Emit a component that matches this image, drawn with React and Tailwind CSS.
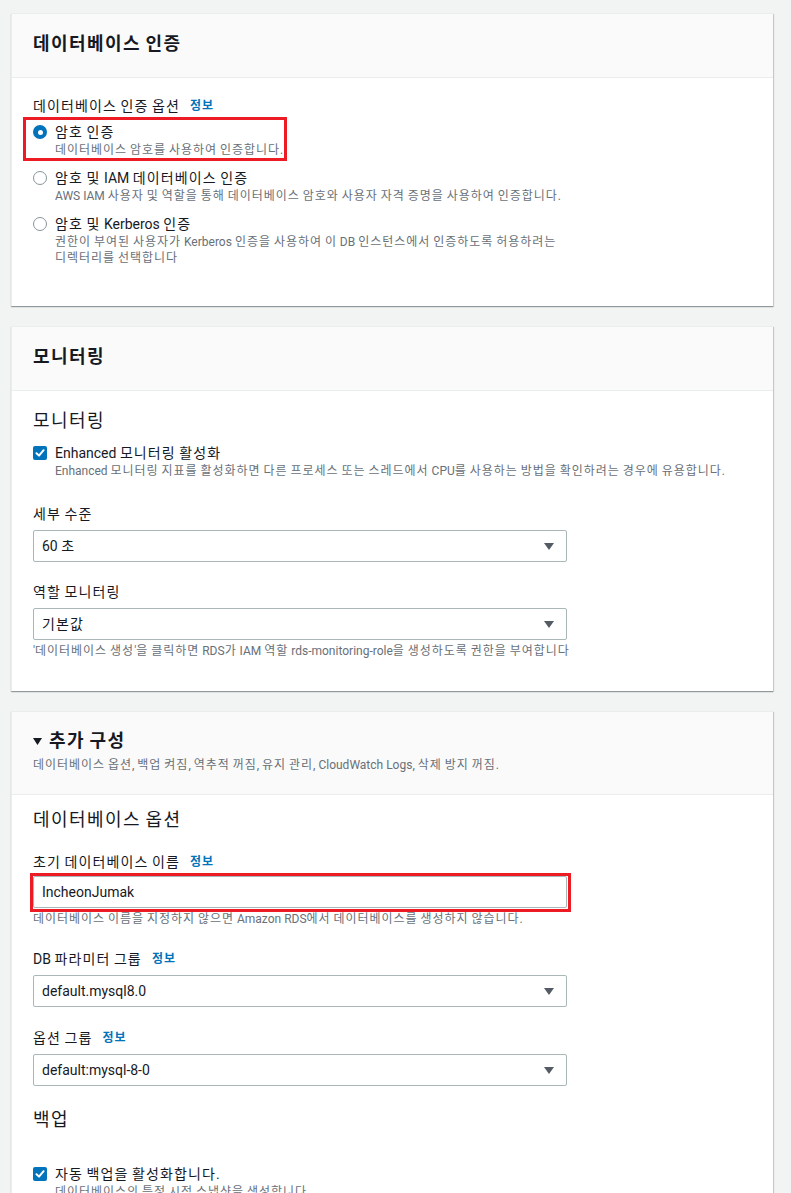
import React from "react";

const HANGUL = /([\uAC00-\uD7A3]+)/;
const k = (str) =>
  str.split(HANGUL).map((part, i) =>
    i % 2 === 1 ? (
      <span key={i} className="tracking-[0.08em]">
        {part}
      </span>
    ) : (
      part
    )
  );

const Info = () => (
  <span className="ml-[10px] text-[12px] font-bold text-[#0073bb]">{k("정보")}</span>
);

const Label = ({ children, info }) => (
  <div className="flex items-center h-[22px] text-[14px] leading-[22px] text-[#16191f]">
    <span>{k(children)}</span>
    {info && <Info />}
  </div>
);

const Arrow = () => (
  <svg width="10" height="7" viewBox="0 0 10 7" className="shrink-0">
    <path d="M0 0 L10 0 L5 7 Z" fill="#545b64" />
  </svg>
);

const Select = ({ value, className = "" }) => (
  <div
    className={
      "flex items-center justify-between w-[534px] h-[32px] border border-[#aab7b8] rounded-[2px] bg-white pl-[8px] pr-[12px] text-[14px] text-[#16191f] " +
      className
    }
  >
    <span>{k(value)}</span>
    <Arrow />
  </div>
);

const Radio = ({ checked }) =>
  checked ? (
    <span className="mt-[3px] flex items-center justify-center w-[14px] h-[14px] rounded-full bg-[#0073bb] shrink-0">
      <span className="w-[5px] h-[5px] rounded-full bg-white" />
    </span>
  ) : (
    <span className="mt-[3px] w-[14px] h-[14px] rounded-full border-[1.5px] border-[#879596] bg-white shrink-0" />
  );

const Checkbox = () => (
  <span className="mt-[2px] flex items-center justify-center w-[14px] h-[14px] rounded-[2px] bg-[#0073bb] shrink-0">
    <svg width="10" height="10" viewBox="0 0 10 10">
      <path d="M1.5 5.2 L4 7.6 L8.6 2.2" stroke="white" strokeWidth="2" fill="none" strokeLinecap="round" strokeLinejoin="round" />
    </svg>
  </span>
);

const RadioOption = ({ checked, title, desc, boxed }) => (
  <div className="relative flex gap-[8px]">
    <Radio checked={checked} />
    <div>
      <div className="text-[14px] leading-[20px] text-[#16191f]">{k(title)}</div>
      {desc.map((line, i) => (
        <div key={i} className="text-[12px] leading-[16px] text-[#687078]">
          {k(line)}
        </div>
      ))}
    </div>
    {boxed && (
      <span className="absolute -left-[10px] -top-[5px] w-[264px] h-[44px] border-[3px] border-[#ed1c24] pointer-events-none" />
    )}
  </div>
);

const CheckOption = ({ title, desc }) => (
  <div className="flex gap-[8px]">
    <Checkbox />
    <div>
      <div className="text-[14px] leading-[18px] text-[#16191f]">{k(title)}</div>
      <div className="mt-[1px] text-[12px] leading-[16px] text-[#687078]">{k(desc)}</div>
    </div>
  </div>
);

const Card = ({ children }) => (
  <div className="bg-white border-t border-l border-[#eaeded] shadow-[0_1px_1px_0_rgba(0,28,36,0.3),1px_1px_1px_0_rgba(0,28,36,0.15)]">
    {children}
  </div>
);

const Header = ({ title }) => (
  <div className="bg-[#fafafa] border-b border-[#eaeded] px-[21px] pt-[18px] pb-[21px]">
    <h2 className="text-[18px] leading-[24px] font-bold text-[#16191f]">{k(title)}</h2>
  </div>
);

const Hint = ({ children }) => (
  <div className="mt-[3px] text-[12px] leading-[16px] text-[#687078]">{k(children)}</div>
);

export default function App() {
  return (
    <div className="min-h-screen bg-[#f2f3f3] pt-[13px] pb-[40px] pl-[11px] pr-[18px] font-['Roboto','Noto_Sans_CJK_KR',sans-serif] text-[#16191f]">
      <div className="flex flex-col gap-[20px]">
        {/* Card 1 */}
        <Card>
          <Header title="데이터베이스 인증" />
          <div className="px-[21px] pt-[17px] pb-[40px]">
            <Label info>데이터베이스 인증 옵션</Label>
            <div className="mt-[5px] flex flex-col gap-[10px]">
              <RadioOption
                checked
                boxed
                title="암호 인증"
                desc={["데이터베이스 암호를 사용하여 인증합니다."]}
              />
              <RadioOption
                title="암호 및 IAM 데이터베이스 인증"
                desc={["AWS IAM 사용자 및 역할을 통해 데이터베이스 암호와 사용자 자격 증명을 사용하여 인증합니다."]}
              />
              <RadioOption
                title="암호 및 Kerberos 인증"
                desc={[
                  "권한이 부여된 사용자가 Kerberos 인증을 사용하여 이 DB 인스턴스에서 인증하도록 허용하려는",
                  "디렉터리를 선택합니다",
                ]}
              />
            </div>
          </div>
        </Card>

        {/* Card 2 */}
        <Card>
          <Header title="모니터링" />
          <div className="px-[21px] pt-[18px] pb-[32px]">
            <h3 className="text-[18px] leading-[24px] text-[#16191f]">{k("모니터링")}</h3>
            <div className="mt-[11px]">
              <CheckOption
                title="Enhanced 모니터링 활성화"
                desc="Enhanced 모니터링 지표를 활성화하면 다른 프로세스 또는 스레드에서 CPU를 사용하는 방법을 확인하려는 경우에 유용합니다."
              />
            </div>
            <div className="mt-[24px]">
              <Label>세부 수준</Label>
              <Select value="60 초" className="mt-[5px]" />
            </div>
            <div className="mt-[19px]">
              <Label>역할 모니터링</Label>
              <Select value="기본값" className="mt-[5px]" />
              <Hint>'데이터베이스 생성'을 클릭하면 RDS가 IAM 역할 rds-monitoring-role을 생성하도록 권한을 부여합니다</Hint>
            </div>
          </div>
        </Card>

        {/* Card 3 */}
        <Card>
          <div className="bg-[#fafafa] border-b border-[#eaeded] px-[21px] pt-[17px] pb-[21px]">
            <div className="flex items-center gap-[7px]">
              <svg width="9" height="7" viewBox="0 0 9 7">
                <path d="M0 0 L9 0 L4.5 7 Z" fill="#16191f" />
              </svg>
              <h2 className="text-[18px] leading-[24px] font-bold text-[#16191f]">{k("추가 구성")}</h2>
            </div>
            <div className="mt-[4px] text-[12px] leading-[16px] text-[#687078]">
              {k("데이터베이스 옵션, 백업 켜짐, 역추적 꺼짐, 유지 관리, CloudWatch Logs, 삭제 방지 꺼짐.")}
            </div>
          </div>
          <div className="px-[21px] pt-[13px] pb-[40px]">
            <h3 className="text-[18px] leading-[24px] text-[#16191f]">{k("데이터베이스 옵션")}</h3>
            <div className="mt-[19px]">
              <Label info>초기 데이터베이스 이름</Label>
              <div className="relative mt-[3px] w-[534px]">
                <div className="flex items-center w-[534px] h-[32px] border border-[#aab7b8] rounded-[2px] bg-white pl-[8px] text-[14px] text-[#16191f]">
                  IncheonJumak
                </div>
                <span className="absolute -left-[3px] -top-[3px] w-[541px] h-[39px] border-[3px] border-[#ed1c24] pointer-events-none" />
              </div>
              <Hint>데이터베이스 이름을 지정하지 않으면 Amazon RDS에서 데이터베이스를 생성하지 않습니다.</Hint>
            </div>
            <div className="mt-[21px]">
              <Label info>DB 파라미터 그룹</Label>
              <Select value="default.mysql8.0" className="mt-[5px]" />
            </div>
            <div className="mt-[20px]">
              <Label info>옵션 그룹</Label>
              <Select value="default:mysql-8-0" className="mt-[5px]" />
            </div>
            <h3 className="mt-[22px] text-[18px] leading-[24px] text-[#16191f]">{k("백업")}</h3>
            <div className="mt-[33px]">
              <CheckOption
                title="자동 백업을 활성화합니다."
                desc="데이터베이스의 특정 시점 스냅샷을 생성합니다."
              />
            </div>
          </div>
        </Card>
      </div>
    </div>
  );
}
